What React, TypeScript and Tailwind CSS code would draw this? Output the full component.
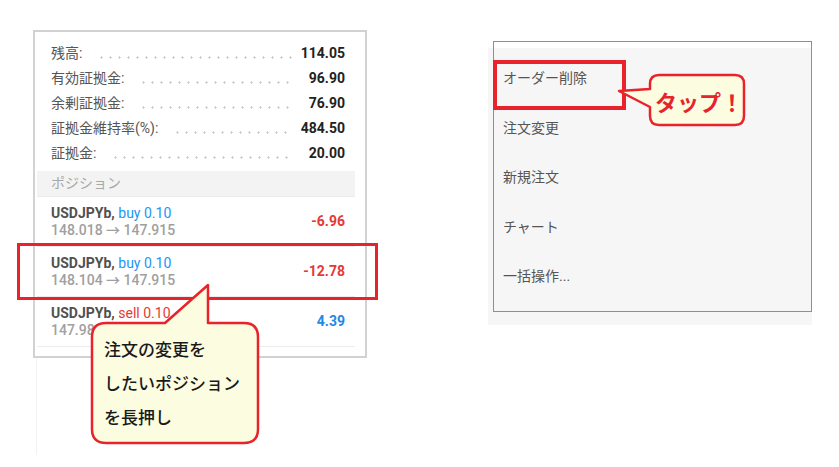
import React from "react";

const summary = [
  { label: "残高:", value: "114.05" },
  { label: "有効証拠金:", value: "96.90" },
  { label: "余剰証拠金:", value: "76.90" },
  { label: "証拠金維持率(%):", value: "484.50" },
  { label: "証拠金:", value: "20.00" },
];

const positions = [
  { side: "buy", lots: "0.10", from: "148.018", to: "147.915", profit: "-6.96" },
  { side: "buy", lots: "0.10", from: "148.104", to: "147.915", profit: "-12.78" },
  { side: "sell", lots: "0.10", from: "147.985", to: "147.915", profit: "4.39" },
];

const menu = ["オーダー削除", "注文変更", "新規注文", "チャート", "一括操作..."];

function SummaryRow(props: { label: string; value: string }) {
  return (
    <div className="flex h-[25px] items-center pl-[14px] pr-[10px]">
      <span className="text-[14px] text-[#555]">{props.label}</span>
      <div className="ml-[15px] h-[3px] flex-1 translate-y-[4px] bg-[radial-gradient(circle,#c4c4c4_0.9px,transparent_1.2px)] bg-[length:9px_3px] bg-repeat-x" />
      <span className="w-[53px] text-right text-[14px] font-bold text-[#222]">
        {props.value}
      </span>
    </div>
  );
}

function PositionRow(props: {
  side: string;
  lots: string;
  from: string;
  to: string;
  profit: string;
}) {
  const isBuy = props.side === "buy";
  const loss = props.profit.startsWith("-");
  return (
    <div className="flex h-[50px] items-center border-b border-[#ececec] pl-[14px] pr-[10px]">
      <div className="flex-1 text-[14px] leading-[17px]">
        <div>
          <span className="font-bold text-[#505050]">USDJPYb, </span>
          <span className={isBuy ? "text-[#2196f3]" : "text-[#e53935]"}>
            {props.side} {props.lots}
          </span>
        </div>
        <div className="font-medium text-[#a0a0a0]">
          {props.from} → {props.to}
        </div>
      </div>
      <span
        className={
          "text-[14px] font-bold " + (loss ? "text-[#e53935]" : "text-[#1e88e5]")
        }
      >
        {props.profit}
      </span>
    </div>
  );
}

export default function App() {
  return (
    <div className="relative flex h-[467px] w-[839px] items-start overflow-hidden bg-white font-['Roboto','Noto_Sans_CJK_JP',sans-serif]">
      {/* left: account panel */}
      <div className="ml-[33px] mt-[30px] flex flex-col">
        <div className="h-[328px] w-[334px] border-2 border-[#d2d2d2] bg-white">
          <div className="ml-[2px] w-[318px] pt-[9px]">
            {summary.map((s) => (
              <SummaryRow key={s.label} label={s.label} value={s.value} />
            ))}
            <div className="mt-[5px] flex h-[26px] items-center border-b border-[#ececec] bg-[#f3f3f3] pl-[14px] text-[14px] text-[#a8a8a8]">
              ポジション
            </div>
            {positions.map((p, i) => (
              <PositionRow key={i} {...p} />
            ))}
          </div>
        </div>
        <div className="ml-[3px] h-[97px] w-px bg-[#f2f2f2]" />
      </div>

      {/* right: context menu */}
      <div className="ml-[121px] mt-[41px] h-[284px] w-[324px] bg-[linear-gradient(transparent_7px,#f6f6f6_7px)]">
        <div className="ml-[5px] h-[271px] w-[319px] border border-[#8f8f8f] bg-[linear-gradient(#fff_6px,#f6f6f6_6px)] pt-[12px]">
          {menu.map((m) => (
            <div
              key={m}
              className="flex h-[49.5px] items-center pl-[9px] text-[14px] text-[#555]"
            >
              {m}
            </div>
          ))}
        </div>
      </div>

      {/* highlight boxes */}
      <div className="absolute left-[17px] top-[243px] h-[57px] w-[361px] border-[3px] border-[#e8232b]" />
      <div className="absolute left-[493px] top-[60px] h-[50px] w-[133px] border-4 border-[#e8232b]" />

      {/* callout shapes */}
      <svg
        className="pointer-events-none absolute left-0 top-0"
        width="839"
        height="467"
        viewBox="0 0 839 467"
      >
        <path
          d="M106 323 L165 323 L208 285 L208 323 L244 323 Q258 323 258 337 L258 429 Q258 443 244 443 L106 443 Q92 443 92 429 L92 337 Q92 323 106 323 Z"
          fill="#fcfce0"
          stroke="#e8232b"
          strokeWidth="2.5"
          strokeLinejoin="round"
        />
        <path
          d="M659 75 L735 75 Q744 75 744 84 L744 116 Q744 125 735 125 L659 125 Q650 125 650 116 L650 107 L619 91 L650 89 L650 84 Q650 75 659 75 Z"
          fill="#fcfce0"
          stroke="#e8232b"
          strokeWidth="2.5"
          strokeLinejoin="round"
        />
      </svg>

      <div className="absolute left-[104px] top-[333px] text-[17px] font-medium leading-[34px] text-[#1a1a1a]">
        <div>注文の変更を</div>
        <div>したいポジション</div>
        <div>を長押し</div>
      </div>
      <div className="absolute left-[655px] top-[89px] text-[22px] font-bold leading-[30px] text-[#e8232b]">
        タップ！
      </div>
    </div>
  );
}
